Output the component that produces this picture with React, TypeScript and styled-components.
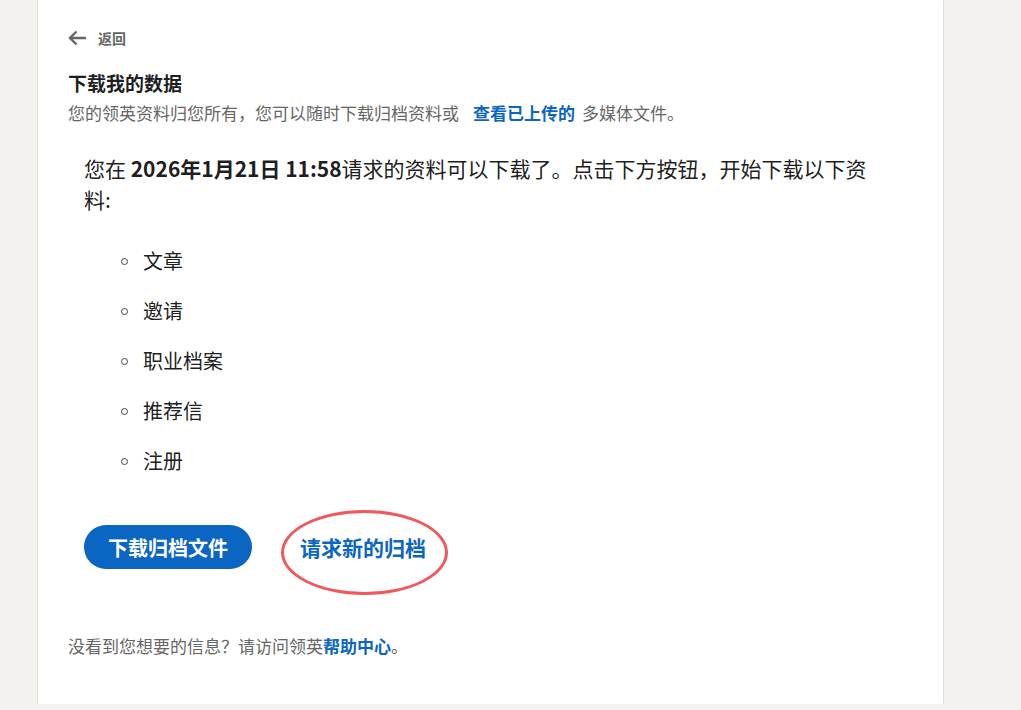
import React from "react";
import styled, { createGlobalStyle } from "styled-components";

const GlobalStyle = createGlobalStyle`
  body {
    margin: 0;
    background: #f3f2ef;
    font-family: "Noto Sans CJK SC", "Noto Sans", sans-serif;
    color: rgba(0, 0, 0, 0.9);
    overflow: hidden;
  }
`;

const Page = styled.div`
  padding-left: 38px;
  height: 710px;
`;

const Card = styled.main`
  width: 905px;
  box-sizing: border-box;
  margin-top: -6px;
  padding: 32px 30px 52px 30px;
  background: #fff;
  border-radius: 8px;
  box-shadow: 0 0 0 1px rgba(0, 0, 0, 0.07);
`;

const BackLink = styled.a`
  display: flex;
  align-items: center;
  gap: 11px;
  height: 24px;
  font-size: 14px;
  font-weight: 700;
  color: #666;
  text-decoration: none;
  cursor: pointer;
`;

const Title = styled.h1`
  margin: 21px 0 6px;
  font-size: 19px;
  line-height: 24px;
  font-weight: 700;
  color: rgba(0, 0, 0, 0.9);
`;

const Subtitle = styled.p`
  margin: 0;
  font-size: 17px;
  line-height: 24px;
  color: #666;
`;

const InlineLink = styled.a<{ $spaced?: boolean }>`
  color: #0a66c2;
  font-weight: 700;
  text-decoration: none;
  cursor: pointer;
  margin: ${(p) => (p.$spaced ? "0 7px 0 14px" : "0")};
`;

const Body = styled.section`
  padding: 0 24px 0 16px;
`;

const Lead = styled.p`
  margin: 28px 0 0;
  font-size: 21px;
  line-height: 31px;
  color: rgba(0, 0, 0, 0.9);
`;

const List = styled.ul`
  list-style: none;
  margin: 31px 0 0;
  padding: 0 0 0 37px;
`;

const Item = styled.li`
  display: flex;
  align-items: center;
  font-size: 20px;
  line-height: 30px;
  margin-bottom: 20px;

  &::before {
    content: "";
    width: 5px;
    height: 5px;
    border: 1.5px solid #444;
    border-radius: 50%;
    margin-right: 15px;
    flex: none;
  }
`;

const Actions = styled.div`
  display: flex;
  align-items: center;
  gap: 48px;
  margin-top: 49px;
`;

const PrimaryButton = styled.button`
  height: 44px;
  padding: 0 24px;
  border: none;
  border-radius: 22px;
  background: #0a66c2;
  color: #fff;
  font-family: inherit;
  font-size: 20px;
  font-weight: 700;
  cursor: pointer;
`;

const TextButton = styled.button`
  position: relative;
  height: 44px;
  padding: 0;
  border: none;
  background: none;
  color: #0a66c2;
  font-family: inherit;
  font-size: 21px;
  font-weight: 700;
  cursor: pointer;

  &::after {
    content: "";
    position: absolute;
    left: -19px;
    right: -22px;
    top: -15px;
    bottom: -26px;
    border: 3px solid #f0585a;
    border-radius: 50%;
  }
`;

const Footer = styled.p`
  margin: 65px 0 0;
  font-size: 17px;
  line-height: 24px;
  color: #666;
`;

const ArrowLeft = () => (
  <svg width="19" height="16" viewBox="0 0 19 16" fill="none">
    <path d="M18 8H2M8.5 1.5L2 8l6.5 6.5" stroke="#666" strokeWidth="2.4" />
  </svg>
);

const items = ["文章", "邀请", "职业档案", "推荐信", "注册"];

export default function App() {
  return (
    <Page>
      <GlobalStyle />
      <Card>
        <BackLink>
          <ArrowLeft />
          返回
        </BackLink>
        <Title>下载我的数据</Title>
        <Subtitle>
          您的领英资料归您所有，您可以随时下载归档资料或<InlineLink $spaced>查看已上传的</InlineLink>多媒体文件。
        </Subtitle>
        <Body>
          <Lead>
            您在 <b>2026年1月21日 11:58</b>请求的资料可以下载了。点击下方按钮，开始下载以下资料:
          </Lead>
          <List>
            {items.map((item) => (
              <Item key={item}>{item}</Item>
            ))}
          </List>
          <Actions>
            <PrimaryButton>下载归档文件</PrimaryButton>
            <TextButton>请求新的归档</TextButton>
          </Actions>
        </Body>
        <Footer>
          没看到您想要的信息？请访问领英<InlineLink>帮助中心</InlineLink>。
        </Footer>
      </Card>
    </Page>
  );
}
